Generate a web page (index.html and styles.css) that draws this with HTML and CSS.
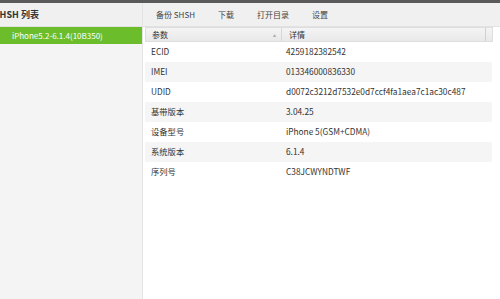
FILE: index.html
```html
<!DOCTYPE html>
<html lang="zh-CN">
    <head>
        <meta charset="UTF-8" />
        <link rel="stylesheet" href="styles.css">
        <title>SHSH</title>
    </head>
    <body>
        <div class="topbar"></div>
        <div class="app">
            <div class="sidebar">
                <div class="side-title">SHSH 列表</div>
                <div class="side-item active">iPhone5.2-6.1.4(10B350)</div>
            </div>
            <div class="main">
                <div class="toolbar">
                    <span class="tool">备份 SHSH</span>
                    <span class="tool">下载</span>
                    <span class="tool">打开目录</span>
                    <span class="tool">设置</span>
                </div>
                <div class="table">
                    <div class="thead">
                        <div class="th th-key">参数<span class="sort">&#9652;</span></div>
                        <div class="th th-val">详情</div>
                    </div>
                    <div class="row"><span class="key">ECID</span><span class="val">4259182382542</span></div>
                    <div class="row alt"><span class="key">IMEI</span><span class="val">013346000836330</span></div>
                    <div class="row"><span class="key">UDID</span><span class="val">d0072c3212d7532e0d7ccf4fa1aea7c1ac30c487</span></div>
                    <div class="row alt"><span class="key">基带版本</span><span class="val">3.04.25</span></div>
                    <div class="row"><span class="key">设备型号</span><span class="val">iPhone 5(GSM+CDMA)</span></div>
                    <div class="row alt"><span class="key">系统版本</span><span class="val">6.1.4</span></div>
                    <div class="row"><span class="key">序列号</span><span class="val">C38JCWYNDTWF</span></div>
                </div>
            </div>
        </div>
    </body>
</html>
```

FILE: styles.css
```css
body {
    margin: 0;
    font-family: "Noto Sans CJK SC", "Noto Sans", sans-serif;
    font-size: 8px;
    color: #333;
    background: #fff;
    overflow: hidden;
}

.topbar {
    height: 3px;
    background: #5a5a5a;
}

.app {
    display: flex;
    height: 296px;
}

/* left list */
.sidebar {
    width: 142px;
    background: #f4f4f4;
    border-right: 1px solid #e4e4e4;
    flex-shrink: 0;
    overflow: hidden;
}

.side-title {
    height: 23px;
    line-height: 23px;
    background: #f0f0f0;
    border-bottom: 1px solid #e2e2e2;
    font-size: 9px;
    font-weight: bold;
    color: #333;
    margin-left: -6px;
    white-space: nowrap;
}

.side-item {
    height: 17px;
    line-height: 17px;
    padding-left: 12px;
    color: #fff;
    font-size: 8px;
}

.side-item.active {
    background: #6cbd2b;
}

/* right side */
.main {
    flex: 1;
    display: flex;
    flex-direction: column;
}

.toolbar {
    height: 23px;
    background: #f0f0f0;
    border-bottom: 1px solid #e2e2e2;
    display: flex;
    align-items: center;
    padding-left: 13px;
}

.tool {
    color: #444;
    font-size: 8px;
    margin-right: 23px;
}

.table {
    padding: 0 7px 0 2px;
}

.thead {
    display: flex;
    height: 13px;
    background: linear-gradient(#f4f4f4, #e9e9e9);
    border: 1px solid #dedede;
}

.th {
    line-height: 13px;
    font-size: 8px;
    color: #333;
}

.th-key {
    width: 129px;
    padding-left: 6px;
    border-right: 1px solid #d8d8d8;
    position: relative;
}

.sort {
    position: absolute;
    right: 5px;
    top: 0;
    color: #aaa;
    font-size: 6px;
}

.th-val {
    flex: 1;
    padding-left: 7px;
    border-right: 1px solid #d0d0d0;
    margin-right: 6px;
}

.row {
    display: flex;
    height: 20px;
    line-height: 19px;
    margin-right: 1px;
    font-size: 8.3px;
}

.row.alt {
    background: #f5f5f5;
}

.key {
    width: 132px;
    padding-left: 6px;
    flex-shrink: 0;
}

.val {
    padding-left: 3px;
}
```
